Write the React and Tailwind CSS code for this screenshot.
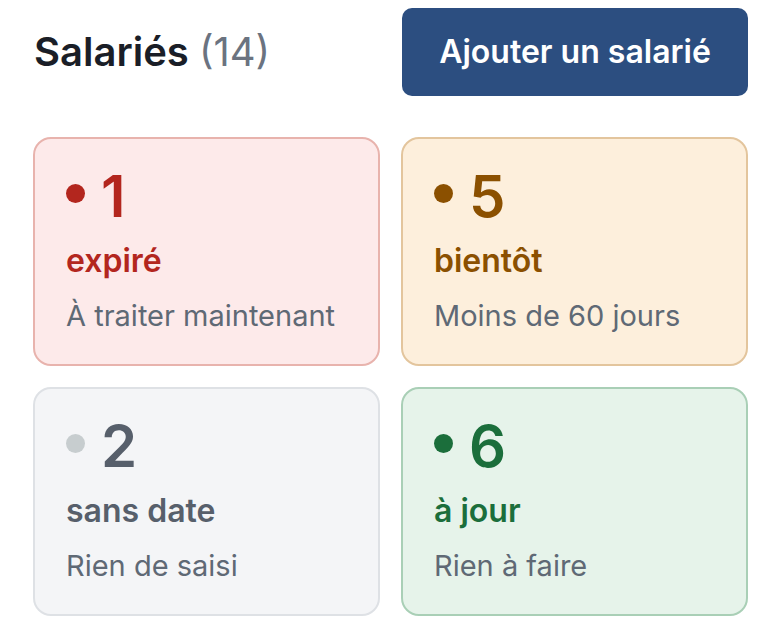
import React from "react";

const cards = [
  {
    count: 1,
    label: "expiré",
    hint: "À traiter maintenant",
    box: "bg-[#fdeaea] border-[#e8b3ad]",
    dot: "bg-[#b3261e]",
    text: "text-[#b3261e]",
  },
  {
    count: 5,
    label: "bientôt",
    hint: "Moins de 60 jours",
    box: "bg-[#fdefdc] border-[#e3c59d]",
    dot: "bg-[#8b5000]",
    text: "text-[#8b5000]",
  },
  {
    count: 2,
    label: "sans date",
    hint: "Rien de saisi",
    box: "bg-[#f4f5f7] border-[#dee1e5]",
    dot: "bg-[#c7cdcf]",
    text: "text-[#575f6b]",
  },
  {
    count: 6,
    label: "à jour",
    hint: "Rien à faire",
    box: "bg-[#e6f3ea] border-[#a9cfb6]",
    dot: "bg-[#1b6e3b]",
    text: "text-[#1b6e3b]",
  },
];

function StatusCard({ card }) {
  return (
    <div className={`rounded-[18px] border-2 px-[31px] pt-[28px] pb-[30px] ${card.box}`}>
      <div className="flex items-center gap-[16px]">
        <span className={`w-[19px] h-[19px] rounded-full flex-shrink-0 -translate-y-[3px] ${card.dot}`} />
        <span className={`text-[58px] font-semibold leading-none ${card.text}`}>
          {card.count}
        </span>
      </div>
      <p className={`mt-[17px] text-[32px] font-semibold leading-[38px] ${card.text}`}>
        {card.label}
      </p>
      <p className="mt-[18px] text-[29px] leading-[36px] text-[#5f6975]">{card.hint}</p>
    </div>
  );
}

export default function App() {
  return (
    <div
      className="min-h-screen bg-white px-8 pt-2"
      style={{ fontFamily: "Inter, 'Noto Sans', sans-serif" }}
    >
      {/* Header */}
      <div className="flex items-center justify-between">
        <h1 className="text-[40px] font-semibold text-[#1a1e27] leading-none pl-[2px]">
          Salariés <span className="font-normal text-[#6b7380]">(14)</span>
        </h1>
        <button className="h-[88px] w-[346px] rounded-[10px] bg-[#2c4e80] text-white text-[32px] font-semibold">
          Ajouter un salarié
        </button>
      </div>

      {/* Status cards */}
      <div className="mt-[41px] grid grid-cols-2 gap-[21px] pl-[1px]">
        {cards.map((c) => (
          <StatusCard key={c.label} card={c} />
        ))}
      </div>
    </div>
  );
}
